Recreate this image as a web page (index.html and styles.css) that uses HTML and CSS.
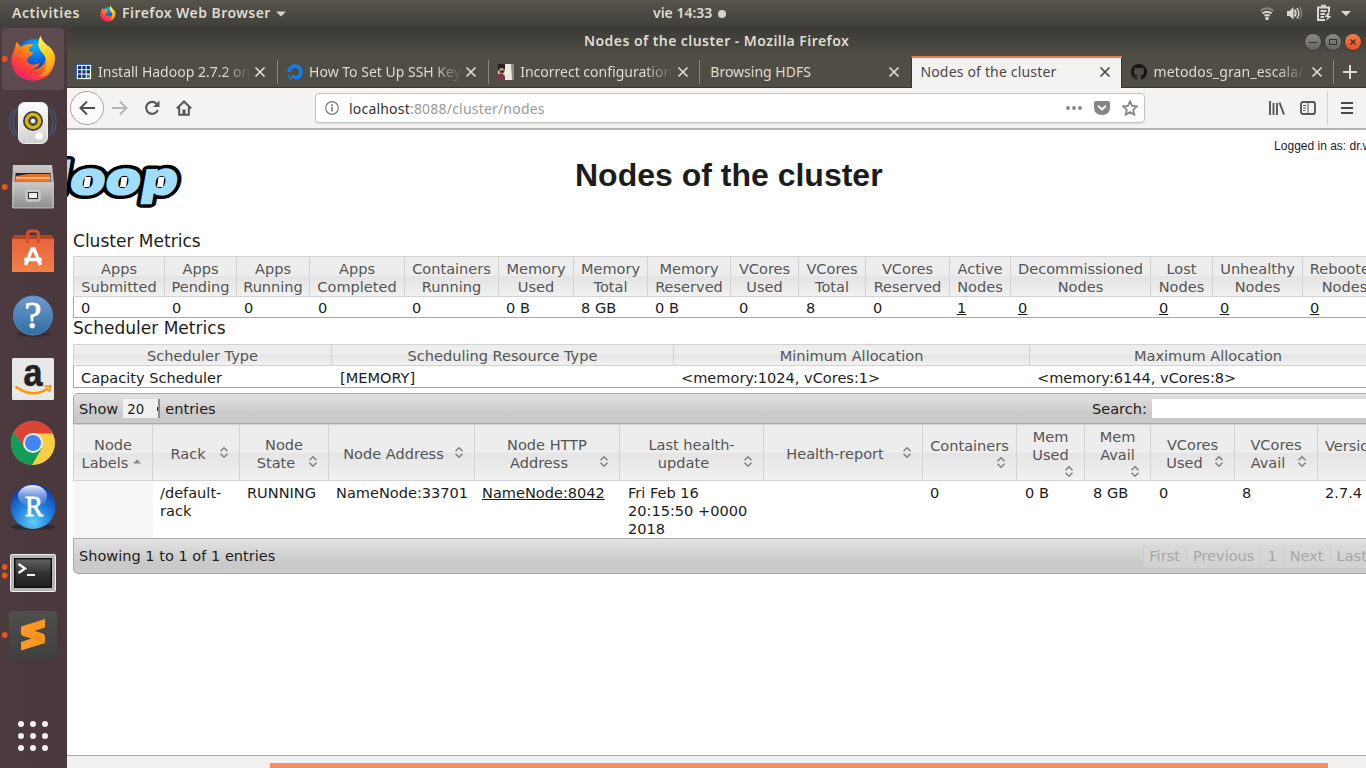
FILE: index.html
```html
<!DOCTYPE html>
<html lang="en">
<head>
<meta charset="utf-8">
<title>Nodes of the cluster</title>
<link rel="stylesheet" href="styles.css">
</head>
<body>
<svg width="0" height="0" class="defs" aria-hidden="true">
  <defs>
    <linearGradient id="fxBody" x1="0.8" y1="0" x2="0.2" y2="1"><stop offset="0" stop-color="#ffd53a"/><stop offset="0.4" stop-color="#ff9310"/><stop offset="0.7" stop-color="#ff4436"/><stop offset="1" stop-color="#f1157c"/></linearGradient>
    <linearGradient id="fxTail" x1="0.3" y1="0" x2="0.6" y2="1"><stop offset="0" stop-color="#fff151"/><stop offset="0.5" stop-color="#ffcb20"/><stop offset="1" stop-color="#ff8a16"/></linearGradient>
    <radialGradient id="fxGlobe" cx="0.55" cy="0.2" r="0.8"><stop offset="0" stop-color="#00b4f8"/><stop offset="0.5" stop-color="#0668e0"/><stop offset="1" stop-color="#1e2a86"/></radialGradient>
    <linearGradient id="silver" x1="0" y1="0" x2="0" y2="1"><stop offset="0" stop-color="#c9c9c9"/><stop offset="1" stop-color="#8e8e8e"/></linearGradient>
    <linearGradient id="white" x1="0" y1="0" x2="0" y2="1"><stop offset="0" stop-color="#fff"/><stop offset="1" stop-color="#d0d0d0"/></linearGradient>
    <linearGradient id="bag" x1="0" y1="0" x2="0" y2="1"><stop offset="0" stop-color="#e8633a"/><stop offset="1" stop-color="#f18048"/></linearGradient>
    <linearGradient id="helpBlue" x1="0" y1="0" x2="0" y2="1"><stop offset="0" stop-color="#7398d3"/><stop offset="1" stop-color="#2e6fa4"/></linearGradient>
    <radialGradient id="rBlue" cx="0.5" cy="0.85" r="0.8"><stop offset="0" stop-color="#62cbf8"/><stop offset="0.5" stop-color="#1f83e0"/><stop offset="1" stop-color="#1238a8"/></radialGradient>
    <linearGradient id="rGloss" x1="0" y1="0" x2="0" y2="1"><stop offset="0" stop-color="#eef2ff"/><stop offset="1" stop-color="#6c9ce8" stop-opacity="0.2"/></linearGradient>
    <linearGradient id="term" x1="0" y1="0" x2="0" y2="1"><stop offset="0" stop-color="#606060"/><stop offset="0.5" stop-color="#333"/><stop offset="1" stop-color="#202020"/></linearGradient>
    <linearGradient id="subl" x1="0" y1="0" x2="0" y2="1"><stop offset="0" stop-color="#4e4e4e"/><stop offset="1" stop-color="#404040"/></linearGradient>
    <symbol id="firefox" viewBox="0 0 46 48">
      <circle cx="23" cy="23" r="18" fill="url(#fxGlobe)"/>
      <path d="M6 8 Q9 10 10 13 Q14 10 19 10 Q22 10 23 11 Q19 13 18 17 L22 18 Q24 20 18 23 Q16 25 17 28 Q20 32 26 30 L29 29 Q28 34 22 35 Q29 36 34 29 Q38 21 30 13 Q27 7 30 2 Q32 9 39 13 Q46 20 44 28 Q42 42 29 46 Q14 49 5 39 Q-1 31 2 20 Q5 13 6 8Z" fill="url(#fxBody)"/>
      <path d="M30 2 Q32 9 39 13 Q46 20 44 28 Q41 41 28 43 Q36 38 36 29 Q36 23 31 18 Q25 11 30 2Z" fill="url(#fxTail)"/>
    </symbol>
    <symbol id="close" viewBox="0 0 12 12"><path d="M1.5 1.5 10.500 10.500M10.500 1.5 1.5 10.500" stroke="currentColor" stroke-width="1.700" fill="none"/></symbol>
    <symbol id="both" viewBox="0 0 16 16"><path d="M4.500 6.300 8 2.800 11.500 6.300M4.500 8.700 8 12.200 11.500 8.700" fill="none" stroke="#808080" stroke-width="1.500"/></symbol>
    <symbol id="asc" viewBox="0 0 16 16"><path d="M4 9.500 8 5.500 12 9.500Z" fill="#858585"/></symbol>
  </defs>
</svg>

<header class="topbar">
  <span class="activities">Activities</span>
  <svg class="fx-small"><use href="#firefox"/></svg>
  <span class="appname">Firefox Web Browser</span>
  <svg class="caret" viewBox="0 0 10 6"><path d="M0 .5H10L5 5.5Z" fill="#d5d3cf"/></svg>
  <span class="clock">vie 14:33</span><i class="clock-dot"></i>
  <svg class="tray" viewBox="1256 0 100 27">
    <g fill="none" stroke="#d9d7d3" stroke-width="2">
      <path d="M1260.5 11Q1267 5.500 1273.500 11" stroke="#85827a"/><path d="M1262.500 13.500Q1267 10 1271.500 13.500"/><path d="M1264.500 16Q1267 14 1269.500 16"/>
      <path d="M1294.500 10Q1297 13 1294.500 16.500"/><path d="M1296.800 8Q1301 13 1296.800 18.500" stroke-width="1.500"/><path d="M1299.500 7Q1304 13 1299.500 19.500" stroke="#85827a" stroke-width="1.300"/>
      <path d="M1318 7.500H1329V12M1318 6.500V20H1325"/><path d="M1321 5.800H1326M1320.500 11H1326.500M1320.500 14H1325M1320.500 17H1324"/>
    </g>
    <circle cx="1267" cy="18.500" r="1.800" fill="#d9d7d3"/><path d="M1287 11H1289.500L1293.500 7V19.500L1289.500 16H1287Z M1328 12.500 1324.500 17H1327.500L1326 21 1331.500 16H1328.500L1330 12.500Z" fill="#d9d7d3"/>
    <path d="M1341 11H1351L1346 16Z" fill="#d9d7d3"/>
  </svg>
</header>

<div class="desktop">
<nav class="dock">
  <svg class="slot" viewBox="0 0 67 64"><rect x="2" y="1" width="62" height="62" rx="4" fill="#5e4b50"/><circle cx="4.700" cy="32" r="2.900" fill="#e95420"/><use href="#firefox" x="10.500" y="7" width="46" height="48"/></svg>
  <svg class="slot" viewBox="0 0 67 64"><g fill="none" stroke="#46587c" stroke-width="1.300"><path d="M17 17Q9 31 17 45M13.500 18Q6 31 13.500 44M49 17Q57 31 49 45M52.500 18Q60 31 52.500 44"/></g><rect x="18.500" y="11.500" width="29" height="41" rx="6" fill="url(#white)" stroke="#eee"/><circle cx="33" cy="30" r="10" fill="#3d3d3d"/><circle cx="33" cy="30" r="8.200" fill="#d8b50c"/><circle cx="33" cy="30" r="4" fill="#777" stroke="#252525" stroke-width="1.300"/><circle cx="33" cy="30" r="2" fill="#fff"/><circle cx="39" cy="45" r="3.600" fill="#fff"/></svg>
  <svg class="slot" viewBox="0 0 67 64"><circle cx="4.700" cy="32" r="2.900" fill="#e95420"/><path d="M13 10H52L54 28V53H12V28Z" fill="url(#silver)"/><rect x="15.500" y="18" width="35" height="10" fill="#222"/><path d="M16 21 28 19H50V27H16Z" fill="#e8722a"/><path d="M16 23H50" stroke="#ffc68a" stroke-width="1.500"/><path d="M13 27.500H53V53H13Z" fill="url(#silver)" stroke="#d0d0d0" stroke-width=".8"/><rect x="26" y="35.500" width="14" height="10.500" rx="2" fill="#bbb" stroke="#d8d8d8"/><rect x="28.500" y="37.500" width="9" height="6" fill="#eee" stroke="#333"/></svg>
  <svg class="slot" viewBox="0 0 67 64"><path d="M14 16H52L54 20H12Z" fill="#b4431f"/><rect x="12" y="20" width="42" height="33" fill="url(#bag)"/><path d="M27.500 24V15Q27.500 12 31 12H35Q38.500 12 38.500 15V24" fill="none" stroke="#d94e26" stroke-width="3"/><path d="M25.500 46 32 30H34L40.500 46" fill="none" stroke="#fff" stroke-width="3.500"/><path d="M24 40.500H42" stroke="#fff" stroke-width="3.500"/></svg>
  <svg class="slot" viewBox="0 0 67 64"><ellipse cx="33" cy="51" rx="17" ry="3" fill="#392d31"/><circle cx="33" cy="32.500" r="19.500" fill="url(#helpBlue)" stroke="#4a91c4"/><text x="33" y="45" font-family="Liberation Serif" font-size="38" fill="#fff" stroke="#fff" stroke-width=".8" text-anchor="middle">?</text></svg>
  <svg class="slot" viewBox="0 0 67 64"><rect x="12" y="11" width="42" height="42" rx="1.500" fill="#e8e8e8"/><text x="33" y="39" font-family="Liberation Sans" font-weight="700" font-size="38" fill="#222" stroke="#222" stroke-width=".6" text-anchor="middle" textLength="19" lengthAdjust="spacingAndGlyphs">a</text><path d="M15.500 39.500Q32 52 48 41.500" fill="none" stroke="#ff9900" stroke-width="2.600"/><path d="M44.500 39.500 50.500 39 49 45" fill="none" stroke="#ff9900" stroke-width="2"/></svg>
  <svg class="slot" viewBox="0 0 67 64"><circle cx="33" cy="32" r="22" fill="#fdcd42"/><path d="M13.800 21A22 22 0 0 1 53 22.500H33L24 38Z" fill="#dc4437"/><path d="M13.800 21A22 22 0 0 0 32 54L42 37 24.500 37Z" fill="#109d58"/><circle cx="33" cy="32" r="10" fill="#f1f1f1"/><circle cx="33" cy="32" r="8" fill="#4286f4"/></svg>
  <svg class="slot" viewBox="0 0 67 64"><ellipse cx="33" cy="52" rx="22" ry="3" fill="#30292f"/><circle cx="33" cy="31.500" r="22.500" fill="url(#rBlue)"/><ellipse cx="32.500" cy="21" rx="14.500" ry="11" fill="url(#rGloss)"/><text x="34" y="41" font-family="Liberation Serif" font-size="29" stroke="#fff" stroke-width=".8" fill="#fff" text-anchor="middle" textLength="18" lengthAdjust="spacingAndGlyphs">R</text></svg>
  <svg class="slot" viewBox="0 0 67 64"><circle cx="4.700" cy="28" r="2.900" fill="#e95420"/><circle cx="4.700" cy="36.500" r="2.900" fill="#e95420"/><rect x="10.500" y="15.500" width="45" height="37" rx="1" fill="#b5b5b5" stroke="#efefef"/><rect x="14" y="19" width="38" height="30" fill="#111"/><rect x="15.500" y="20.500" width="35" height="27" fill="url(#term)"/><path d="M18.500 25 25 29.500 18.500 34" fill="none" stroke="#fff" stroke-width="2.300"/><path d="M27 36H35" stroke="#fff" stroke-width="2"/></svg>
  <svg class="slot" viewBox="0 0 67 64"><circle cx="4.700" cy="32" r="2.900" fill="#e95420"/><rect x="9" y="8" width="48" height="48" rx="3" fill="url(#subl)"/><path d="M21 23.500 45 16V24.500L34.500 28 42 30.200Q45 31.200 45 34V40L21 47.500V39L31.500 35.500 24 33.300Q21 32.500 21 30Z" fill="#ff9820"/><path d="M31.500 35.500 45 40 41 32Z" fill="#e67e0c" opacity=".3"/></svg>
  <svg class="slot apps" viewBox="0 0 67 64"><g fill="#f2f1f0"><circle cx="21" cy="20" r="3"/><circle cx="33" cy="20" r="3"/><circle cx="45" cy="20" r="3"/><circle cx="21" cy="32" r="3"/><circle cx="33" cy="32" r="3"/><circle cx="45" cy="32" r="3"/><circle cx="21" cy="44" r="3"/><circle cx="33" cy="44" r="3"/><circle cx="45" cy="44" r="3"/></g></svg>
</nav>

<section class="window">
  <div class="titlebar"><span class="wtitle">Nodes of the cluster - Mozilla Firefox</span>
    <span class="wbtn"><svg viewBox="0 0 16 16"><path d="M4 8.500H12" stroke="#33322e"/></svg></span>
    <span class="wbtn"><svg viewBox="0 0 16 16"><rect x="4.500" y="5.500" width="7" height="5" fill="none" stroke="#33322e"/></svg></span>
    <span class="wbtn red"><svg viewBox="0 0 16 16"><path d="M5.500 5.500 10.500 10.500M10.500 5.500 5.500 10.500" stroke="#33322e" stroke-width="1.300"/></svg></span>
  </div>
  <div class="tabs">
    <div class="tab"><svg class="fav" viewBox="0 0 16 16"><rect width="16" height="16" fill="#3767c1"/><rect x="1" y="1" width="14" height="14" fill="#fff"/><g fill="#173568"><path d="M2 2h3.300v3.300H2zM6.300 2h3.300v3.300H6.300zM10.600 2h3.300v3.300h-3.300zM2 6.300h3.300v3.300H2zM6.300 6.300h3.300v3.300H6.300zM10.600 6.300h3.300v3.300h-3.300zM2 10.600h3.300v3.300H2zM6.300 10.600h3.300v3.300H6.300z"/></g><path d="M10.600 10.600h3.300v3.300h-3.300z" fill="#159a86"/></svg><span class="tt fade">Install Hadoop 2.7.2 on</span><svg class="x"><use href="#close"/></svg></div>
    <div class="tab"><svg class="fav" viewBox="0 0 16 16"><path d="M2 8A6 6 0 1 1 8 14" fill="none" stroke="#0a80f5" stroke-width="3.400"/><path d="M5 11h3v3H5zM2.500 13h2.500v2.500H2.500zM.8 11h1.700v2H.8z" fill="#0a80f5"/></svg><span class="tt fade">How To Set Up SSH Keys</span><svg class="x"><use href="#close"/></svg></div>
    <div class="tab"><svg class="fav" viewBox="0 0 16 16"><rect width="16" height="16" fill="#ece9df"/><path d="M0 0H7V4L6 9H2L0 6Z" fill="#26211f"/><path d="M1.500 4H5.500L6 9 3 10 1 8Z" fill="#b58673"/><path d="M2 7H6V8.500H2Z" fill="#2b2220"/><path d="M0 10 4 9 7 12V16H0Z" fill="#773b48"/><path d="M13 0H16V16H14Z" fill="#8d8d76"/></svg><span class="tt fade">Incorrect configuration</span><svg class="x"><use href="#close"/></svg></div>
    <div class="tab"><span class="tt plain">Browsing HDFS</span><svg class="x"><use href="#close"/></svg></div>
    <div class="tab active"><span class="tt">Nodes of the cluster</span><svg class="x"><use href="#close"/></svg></div>
    <div class="tab"><svg class="fav" viewBox="0 0 16 16"><path d="M8 0C3.580 0 0 3.580 0 8c0 3.540 2.290 6.530 5.470 7.590.4.070.55-.17.55-.38v-1.490c-2.010.37-2.530-.49-2.690-.94-.09-.23-.48-.94-.82-1.130-.28-.15-.68-.52-.01-.53.63-.01 1.080.58 1.230.82.72 1.210 1.870.87 2.330.66.070-.52.28-.87.51-1.070-1.780-.2-3.640-.89-3.640-3.950 0-.87.31-1.590.82-2.150-.08-.2-.36-1.020.08-2.120 0 0 .67-.21 2.200.82a7.400 7.400 0 0 1 4 0c1.530-1.040 2.200-.82 2.200-.82.44 1.100.16 1.920.08 2.120.51.56.82 1.270.82 2.150 0 3.070-1.870 3.750-3.650 3.950.29.250.54.73.54 1.480v2.200c0 .21.150.46.55.38A8 8 0 0 0 8 0" fill="#161514"/></svg><span class="tt fade wide">metodos_gran_escala/</span><svg class="x"><use href="#close"/></svg></div>
    <div class="newtab"><svg viewBox="0 0 14 14"><path d="M7 0V14M0 7H14" stroke="#dfdbd2" stroke-width="2"/></svg></div>
  </div>
  <div class="toolbar">
    <span class="back"><svg viewBox="0 0 16 16"><path d="M16 8H1.500M8 1.500 1.500 8 8 14.500" fill="none" stroke="#4f4e4d" stroke-width="2"/></svg></span>
    <svg class="nav fwd" viewBox="0 0 16 16"><path d="M0 8H14.500M8 1.500 14.500 8 8 14.500" fill="none" stroke="#b7b5b3" stroke-width="2"/></svg>
    <svg class="nav rel" viewBox="0 0 16 16"><path d="M13 4.300A6 6 0 1 0 13.800 10" fill="none" stroke="#585756" stroke-width="2.100"/><path d="M15.500 .5V7H9Z" fill="#585756"/></svg>
    <svg class="nav home" viewBox="0 0 16 16"><path d="M.8 8.500 8 1.500 15.200 8.500M3.200 7V14.700H12.800V7" fill="none" stroke="#585756" stroke-width="2"/><path d="M6.500 9.500H9.500V15H6.500Z" fill="#585756"/></svg>
    <div class="url">
      <svg class="info" viewBox="0 0 14 14"><circle cx="7" cy="7" r="6.300" fill="none" stroke="#777" stroke-width="1.200"/><path d="M7 6V10.500M7 3.300V4.900" stroke="#777" stroke-width="1.600"/></svg>
      <span class="host">localhost<em>:8088/cluster/nodes</em></span>
      <svg class="dots" viewBox="0 0 16 4"><g fill="#858585"><circle cx="2" cy="2" r="1.900"/><circle cx="8" cy="2" r="1.900"/><circle cx="14" cy="2" r="1.900"/></g></svg>
      <svg class="pocket" viewBox="0 0 16 14"><path d="M2 0H14Q16 0 16 2V6Q16 14 8 14T0 6V2Q0 0 2 0Z" fill="#858585"/><path d="M4 4.800 8 8.500 12 4.800" fill="none" stroke="#fff" stroke-width="1.900"/></svg>
      <svg class="star" viewBox="0 0 16 16"><path d="M8 1.300 10 5.800 15 6.300 11.200 9.700 12.300 14.700 8 12 3.700 14.700 4.800 9.700 1 6.300 6 5.800Z" fill="none" stroke="#858585" stroke-width="1.800"/></svg>
    </div>
    <svg class="lib" viewBox="0 0 16 14"><path d="M1 0V14M4.500 2V14M8 2V14" stroke="#585756" stroke-width="1.900"/><path d="M10.500 1.500 15 13.500" stroke="#585756" stroke-width="2"/></svg>
    <svg class="side" viewBox="0 0 16 14"><rect x="1" y="1" width="14" height="12" rx="2" fill="none" stroke="#585756" stroke-width="1.900"/><path d="M8 1V13M3 4.500H6M3 7H6M3 9.500H5" stroke="#585756"/></svg>
    <i class="vsep"></i>
    <svg class="burger" viewBox="0 0 12 12"><path d="M0 1H12M0 6H12M0 11H12" stroke="#484746" stroke-width="1.800"/></svg>
  </div>

  <main class="page">
    <div class="banner">
      <svg class="logo" viewBox="67 150 120 62"><g font-family="DejaVu Sans" font-weight="700" font-size="44" transform="translate(31 194) skewX(-10)"><text textLength="145" lengthAdjust="spacingAndGlyphs" fill="#000" stroke="#000" stroke-width="9" stroke-linejoin="round">doop</text><text textLength="145" lengthAdjust="spacingAndGlyphs" fill="#9fdefe" stroke="#9fdefe" stroke-width="2">doop</text></g><g fill="#fff"><path d="M85 177H91L89.500 187H83.500ZM121.500 177H127.500L126 187H120ZM158.500 177H164.500L163 187H157Z"/></g></svg>
      <h1>Nodes of the cluster</h1>
      <span class="login">Logged in as: dr.who</span>
    </div>
    <h3>Cluster Metrics</h3>
    <div class="grid metrics">
      <div class="row head"><div>Apps<br>Submitted</div><div>Apps<br>Pending</div><div>Apps<br>Running</div><div>Apps<br>Completed</div><div>Containers<br>Running</div><div>Memory<br>Used</div><div>Memory<br>Total</div><div>Memory<br>Reserved</div><div>VCores<br>Used</div><div>VCores<br>Total</div><div>VCores<br>Reserved</div><div>Active<br>Nodes</div><div>Decommissioned<br>Nodes</div><div>Lost<br>Nodes</div><div>Unhealthy<br>Nodes</div><div>Rebooted<br>Nodes</div></div>
      <div class="row body"><div>0</div><div>0</div><div>0</div><div>0</div><div>0</div><div>0 B</div><div>8 GB</div><div>0 B</div><div>0</div><div>8</div><div>0</div><div><u>1</u></div><div><u>0</u></div><div><u>0</u></div><div><u>0</u></div><div><u>0</u></div></div>
    </div>
    <h3 class="second">Scheduler Metrics</h3>
    <div class="grid sched">
      <div class="row head"><div>Scheduler Type</div><div>Scheduling Resource Type</div><div>Minimum Allocation</div><div>Maximum Allocation</div></div>
      <div class="row body"><div>Capacity Scheduler</div><div>[MEMORY]</div><div>&lt;memory:1024, vCores:1&gt;</div><div>&lt;memory:6144, vCores:8&gt;</div></div>
    </div>
    <div class="bar top"><span>Show</span><span class="select">20<i></i></span><span>entries</span><span class="search">Search:</span><span class="field"></span></div>
    <div class="nodes">
      <div class="row head">
        <div><p>Node</p><p class="s"><span>Labels</span><svg><use href="#asc"/></svg></p></div>
        <div><p class="s"><span>Rack</span><svg><use href="#both"/></svg></p></div>
        <div><p>Node</p><p class="s"><span>State</span><svg><use href="#both"/></svg></p></div>
        <div><p class="s"><span>Node Address</span><svg><use href="#both"/></svg></p></div>
        <div><p>Node HTTP</p><p class="s"><span>Address</span><svg><use href="#both"/></svg></p></div>
        <div><p>Last health-</p><p class="s"><span>update</span><svg><use href="#both"/></svg></p></div>
        <div><p class="s"><span>Health-report</span><svg><use href="#both"/></svg></p></div>
        <div><p>Containers</p><p class="s i"><span></span><svg><use href="#both"/></svg></p></div>
        <div><p>Mem</p><p>Used</p><p class="s i"><span></span><svg><use href="#both"/></svg></p></div>
        <div><p>Mem</p><p>Avail</p><p class="s i"><span></span><svg><use href="#both"/></svg></p></div>
        <div><p>VCores</p><p class="s"><span>Used</span><svg><use href="#both"/></svg></p></div>
        <div><p>VCores</p><p class="s"><span>Avail</span><svg><use href="#both"/></svg></p></div>
        <div><p>Version</p><p class="s i"></p></div>
      </div>
      <div class="row body"><div></div><div>/default-<br>rack</div><div>RUNNING</div><div>NameNode:33701</div><div><u>NameNode:8042</u></div><div>Fri Feb 16<br>20:15:50 +0000<br>2018</div><div></div><div>0</div><div>0 B</div><div>8 GB</div><div>0</div><div>8</div><div>2.7.4</div></div>
    </div>
    <div class="bar bottom"><span>Showing 1 to 1 of 1 entries</span><div class="pager"><span>First</span><span>Previous</span><span>1</span><span>Next</span><span>Last</span></div></div>
  </main>
  <div class="scroll"><i></i></div>
</section>
</div>
</body>
</html>
```
FILE: styles.css
```css
* { box-sizing: border-box; }
body { margin: 0; width: 1366px; height: 768px; overflow: hidden; display: flex; flex-direction: column; font-family: "Noto Sans", sans-serif; background: #fff; }
svg { display: block; flex: none; }
.defs { position: absolute; }
.topbar { height: 27px; flex: none; display: flex; align-items: center; background: linear-gradient(#57544b, #403f3a); color: #dfdbd2; font-size: 14px; font-weight: 600; white-space: nowrap; }
.topbar span { padding-bottom: 2px; }
.activities { width: 68px; margin-left: 12px; letter-spacing: 0.550px; }
.fx-small { width: 16px; height: 17px; margin-left: 20px; }
.appname { width: 150px; margin-left: 6px; letter-spacing: 0.450px; }
.caret { width: 10px; height: 6px; margin-left: 4px; }
.clock { width: 61px; margin-left: 367px; }
.clock-dot { width: 8px; height: 8px; border-radius: 50%; background: #d5d3cf; margin-left: 4px; }
.tray { width: 100px; height: 27px; margin-left: auto; margin-right: 10px; }
.desktop { flex: 1; display: flex; min-height: 0; }
.dock { width: 67px; flex: none; display: flex; flex-direction: column; background: linear-gradient(90deg, #4b3a3e, #4a383c); }
.slot { width: 67px; height: 64px; }
.apps { margin-top: auto; }
.window { flex: 1; min-width: 0; display: flex; flex-direction: column; }
.titlebar { height: 29px; flex: none; display: flex; align-items: center; padding-right: 5px; background: linear-gradient(#3b3a36, #504d45); color: #dfdbd2; font-size: 14px; font-weight: 600; white-space: nowrap; }
.wtitle { width: 268px; margin: 0 auto 0 517px; padding-bottom: 2px; letter-spacing: 0.440px; }
.wbtn { width: 16px; height: 16px; border-radius: 50%; margin-left: 4px; background: linear-gradient(#8b8983, #66645e); box-shadow: 0 0 0 1px #383733; }
.wbtn.red { background: linear-gradient(#f67b52, #e5501f); }
.tabs { height: 32px; flex: none; display: flex; background: #504d45; }
.tab { width: 211.100px; flex: none; display: flex; align-items: center; padding: 0 11px 0 9px; border-bottom: 1px solid #383630; color: #dfdbd2; font-size: 14px; background: linear-gradient(#8a867d, #8a867d) right 4px / 1px 24px no-repeat; }
.tab:nth-child(-n+2) { padding-right: 12px; }
.tab:nth-child(4) { background: none; }
.tab.active { background: #f4f3f2; border-bottom: 0; border-top: 2px solid #f07746; border-left: 1px solid #383630; color: #4a4845; box-shadow: inset -1px 0 #383630; padding-bottom: 3px; padding-left: 8px; letter-spacing: 0.180px; }
.fav { width: 16px; height: 16px; margin-right: 6px; }
.tt { flex: 1; overflow: hidden; white-space: nowrap; }
.plain { padding-left: 1px; }
.fade { -webkit-mask-image: linear-gradient(90deg, #000 125px, transparent 153px); mask-image: linear-gradient(90deg, #000 125px, transparent 153px); }
.wide { letter-spacing: 0.150px; }
.x { width: 12px; height: 12px; margin-left: 4px; }
.newtab { flex: 1; display: flex; align-items: center; padding-left: 9px; border-bottom: 1px solid #383630; }
.newtab svg { width: 14px; height: 14px; }
.toolbar { height: 42px; flex: none; display: flex; align-items: center; background: #f4f3f2; border-bottom: 2px solid #b5b3b1; }
.back { width: 34px; height: 34px; border: 1px solid #aaa8a6; border-radius: 50%; background: #fcfcfc; margin-left: 3px; display: grid; place-items: center; }
.back svg, .nav { width: 16px; height: 16px; }
.fwd { margin-left: 8px; }
.rel { margin-left: 16px; }
.home { margin-left: 16px; }
.url { width: 830px; height: 30px; margin-left: 123px; border: 1px solid #c4c2c0; border-radius: 4px; background: #fff; display: flex; align-items: center; padding: 0 6px 0 9px; font-size: 14px; box-shadow: 0 1px 2px #e2e1e0; }
.info { width: 14px; height: 14px; }
.host { flex: 1; margin-left: 10px; color: #333; letter-spacing: 0.200px; }
.host em { font-style: normal; color: #999; }
.dots { width: 16px; height: 4px; }
.pocket { width: 16px; height: 14px; margin-left: 12px; }
.star { width: 16px; height: 16px; margin-left: 12px; }
.lib { width: 16px; height: 14px; margin-left: 124px; }
.side { width: 16px; height: 14px; margin-left: 15px; }
.vsep { width: 1px; height: 34px; background: #d5d3d1; margin-left: 11px; }
.burger { width: 12px; height: 12px; margin-left: 13px; }
.page { flex: 1; min-height: 0; overflow: hidden; background: #fff; color: #1c1c1c; font-family: "DejaVu Sans", sans-serif; font-size: 14.550px; line-height: 18px; padding-left: 6px; }
.banner { height: 99px; margin-left: -6px; display: flex; align-items: flex-start; white-space: nowrap; font-family: "Liberation Sans", sans-serif; }
.logo { width: 120px; height: 62px; margin-top: 20px; }
h1 { margin: 26px 0 0 388px; width: 308px; font-size: 32px; line-height: 38px; }
.login { margin: 7px 0 0 391.500px; font-size: 12px; }
h3 { margin: 0; height: 27px; line-height: 25px; font-size: 17.050px; font-weight: 400; }
h3.second { height: 26px; line-height: 20px; }
.grid { width: 1400px; border-left: 1px solid #a9a9a9; border-bottom: 1px solid #a9a9a9; }
.row { display: grid; }
.metrics .row { grid-template-columns: 91px 72px 73px 95px 94px 75px 74px 83px 68px 67px 84px 61px 140px 62px 90px 84px; }
.sched .row { grid-template-columns: 258px 342px 356px 480px; }
.head { color: #555; text-align: center; }
.head > div { border: 1px solid #d3d3d3; border-left: 0; background: linear-gradient(#ededed 50%, #e4e4e4 50%, #f1f1f1); white-space: nowrap; }
.grid .head { margin-left: -1px; }
.grid .head > div:first-child { border-left: 1px solid #d3d3d3; }
.metrics .head { grid-template-columns: 92px 72px 73px 95px 94px 75px 74px 83px 68px 67px 84px 61px 140px 62px 90px 84px; }
.sched .head { grid-template-columns: 259px 342px 356px 480px; }
.metrics .head > div { height: 41px; padding-top: 3px; }
.sched .head > div { height: 22px; padding-top: 2px; }
.sched .head > div:last-child { padding-right: 123px; }
.metrics .body { height: 20px; line-height: 21px; }
.sched .body { height: 21px; line-height: 23px; }
.body > div { padding-left: 7px; white-space: nowrap; }
.sched .body > div:nth-child(2) { padding-left: 8px; }
.metrics .body > div:nth-child(4), .metrics .body > div:nth-child(9), .metrics .body > div:nth-child(14) { padding-left: 8px; }
.bar { width: 1400px; border: 1px solid #a9a9a9; background: linear-gradient(#e2e2e2, #c9c9c9 70%, #cacaca); display: flex; align-items: center; padding-left: 5px; white-space: nowrap; }
.top { height: 31px; margin-top: 5px; border-radius: 5px 0 0 0; }
.select { width: 37px; height: 19px; margin: 0 5px; padding-left: 4px; line-height: 21px; font-size: 13.300px; background: #f2f1f0; border-right: 2px solid #8b8b8b; position: relative; }
.select i { position: absolute; right: 0; top: 8px; width: 1px; height: 4px; background: #222; }
.search { margin-left: auto; width: 55px; }
.field { width: 320px; height: 19px; margin-left: 5px; background: #fff; }
.nodes .row { width: 1400px; grid-template-columns: 80px 87px 89px 146px 145px 144px 159px 94px 68px 66px 84px 83px 155px; }
.nodes .head > div { height: 57px; display: flex; flex-direction: column; justify-content: center; padding: 2px 7px 0; }
.nodes .head > div:first-child { border-left: 1px solid #d3d3d3; }
.nodes .head > div:last-child { align-items: flex-start; }
p { margin: 0; height: 18px; }
.s { display: flex; }
.s span { flex: 1; }
.s svg { width: 16px; height: 16px; }
.i { height: 16px; }
.nodes .body > div { height: 57px; padding-top: 3px; }
.nodes .body > div:nth-child(6), .nodes .body > div:nth-child(9), .nodes .body > div:nth-child(10), .nodes .body > div:nth-child(11) { padding-left: 8px; }
.nodes .body > div:first-child { background: #f6f6f6; margin-left: 1px; }
.bottom { height: 36px; border-radius: 0 0 0 5px; }
.pager { margin-left: 868px; display: flex; height: 23px; color: #a6a6a6; line-height: 20px; }
.pager span { height: 23px; padding: 0 6px; border-left: 1px solid #cdcdcd; border-top: 1px solid #d8d8d8; background: linear-gradient(#d9d9d9, #d1d1d1); }
.pager span:first-child { border-radius: 4px 0 0 4px; padding-left: 5px; }
.scroll { height: 13px; flex: none; background: #f2f1f0; border-top: 1px solid #a9a7a5; padding: 7px 38px 0 203px; }
.scroll i { display: block; height: 5px; background: #f28d68; }
```
